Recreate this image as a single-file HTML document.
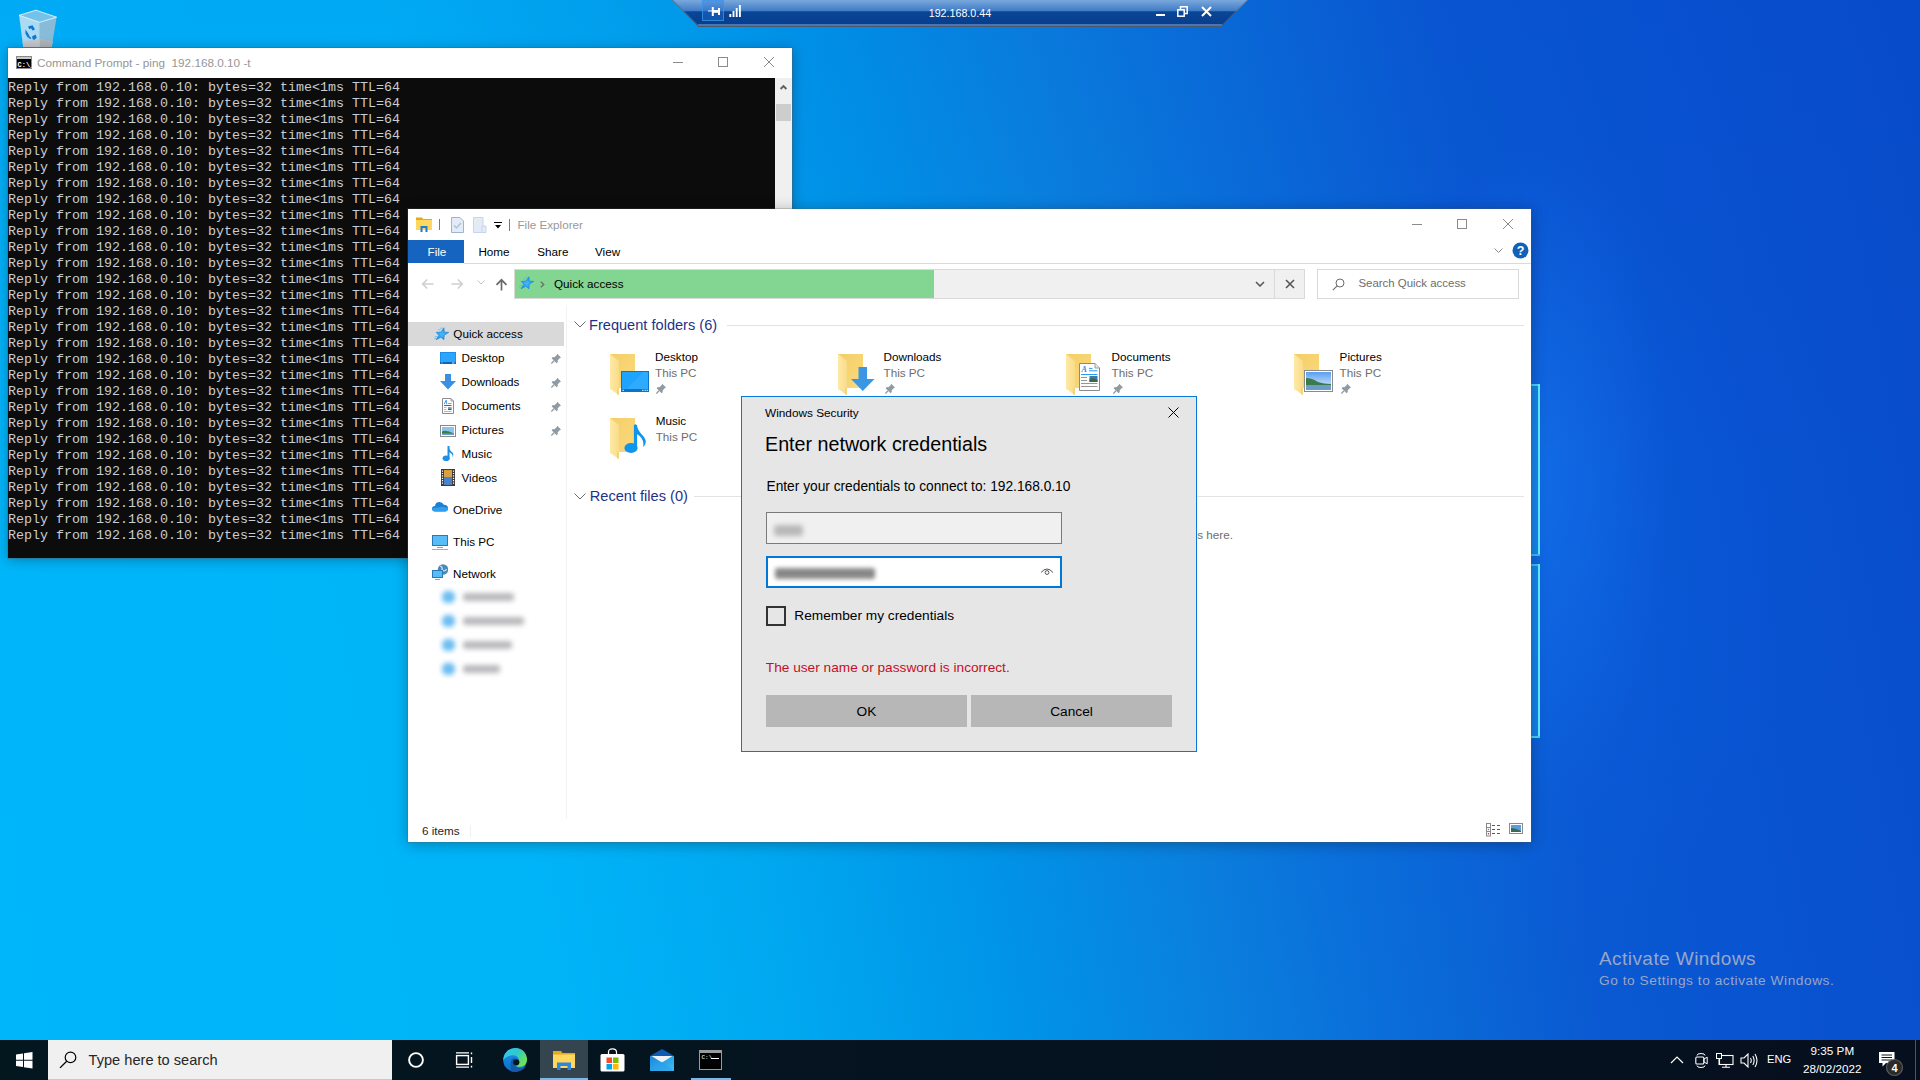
<!DOCTYPE html>
<html><head><meta charset="utf-8">
<style>
*{margin:0;padding:0;box-sizing:border-box}
html,body{width:1920px;height:1080px;overflow:hidden}
body{position:relative;font-family:"Liberation Sans",sans-serif;font-size:11.7px;color:#000;background:#0a50c8}
.a{position:absolute}
.t{position:absolute;white-space:pre;line-height:1}
#bg{position:absolute;left:0;top:0;width:1920px;height:1040px;
background:
 radial-gradient(ellipse 130px 330px at 1540px 470px,rgba(30,140,255,.32),rgba(30,140,255,0) 100%),
 radial-gradient(ellipse 320px 420px at 1480px 560px,rgba(20,110,250,.22),rgba(20,110,250,0) 100%),
 linear-gradient(80deg,#00b6fa 0%,#00b4f8 27%,#00a8f0 37.8%,#0094e8 48.3%,#0a80de 57.8%,#0a70da 64.9%,#0a62d4 72%,#0a58d2 76.8%,#0852d0 88%,#084cca 100%);}
#shade{position:absolute;left:0;top:0;width:1920px;height:1040px;background:linear-gradient(180deg,rgba(0,60,200,.09) 0%,rgba(0,60,200,.03) 30%,rgba(0,60,200,0) 45%)}
#cmd{position:absolute;left:8px;top:48px;width:784px;height:510px;background:#0c0c0c;box-shadow:0 0 0 1px rgba(90,90,90,.35),0 2px 12px rgba(0,0,0,.3)}
#cmd .tb{position:absolute;left:0;top:0;width:784px;height:30px;background:#fff}
#cmd pre{position:absolute;left:0;top:31.5px;font-family:"Liberation Mono",monospace;font-size:13.33px;line-height:16px;color:#cccccc}
#cmd .sb{position:absolute;left:767px;top:30px;width:17px;height:480px;background:#f0f0f0}
#exp{position:absolute;left:408px;top:209px;width:1123px;height:633px;background:#fff;box-shadow:0 0 0 1px rgba(90,90,90,.25),0 2px 14px rgba(0,0,0,.3);overflow:hidden}
#dlg{position:absolute;left:741px;top:396px;width:456px;height:356px;background:#e6e6e6;border:1px solid #0a78d6}
#tb{position:absolute;left:0;top:1040px;width:1920px;height:40px;background:linear-gradient(90deg,#03171f,#051320 50%,#060f1e)}
</style></head><body>
<div id="bg"></div>
<div id="shade"></div>
<svg class="a" style="left:17px;top:8px" width="42" height="42" viewBox="0 0 42 42"><path d="M2.1 7.3L22.8 14.3L22.8 39L6.2 39Z" fill="#b4dcf2" opacity=".95"/><path d="M22.8 14.3L39.6 9.2L34.7 39L22.8 39Z" fill="#8fbcd6" opacity=".95"/><path d="M2.1 7.3L19 2.2L39.6 9.2L22.8 14.3Z" fill="#74c2ea"/><path d="M2.1 7.3L19 2.2L39.6 9.2L22.8 14.3Z" fill="none" stroke="#e6f4fc" stroke-width="0.9"/><path d="M5.6 33.5L22.8 31L35.6 33.5L34.7 39L6.2 39Z" fill="#c4c8cc"/><path d="M22.8 31L35.6 33.5L34.7 39L22.8 39Z" fill="#aeb4b8"/><g fill="#0b78d6"><path d="M11 18.5L15.5 17.2L18 21.5L15.6 22.5L14 20.2L12.4 21.2Z"/><path d="M8.5 21.5L11.2 25.5L12.6 28.5L14.5 30.2L13.2 31L10.4 29L8.4 25.5Z"/><path d="M15 28.5L18.5 26.5L19.8 29.5L17.6 31.8L15.8 31.5Z"/></g></svg>
<div class="a" style="left:1531px;top:384px;width:9px;height:172px;background:rgba(30,170,250,.45)"></div>
<div class="a" style="left:1531px;top:384px;width:9px;height:2px;background:#40d8f0"></div>
<div class="a" style="left:1538px;top:384px;width:2px;height:172px;background:#60f0ff"></div>
<div class="a" style="left:1531px;top:554px;width:9px;height:2px;background:#38c0f0"></div>
<div class="a" style="left:1531px;top:564px;width:9px;height:174px;background:rgba(30,170,250,.45)"></div>
<div class="a" style="left:1531px;top:564px;width:9px;height:2px;background:#38c0f0"></div>
<div class="a" style="left:1538px;top:564px;width:2px;height:174px;background:#60f0ff"></div>
<div class="a" style="left:1531px;top:736px;width:9px;height:2px;background:#40d8f0"></div>
<div class="t" style="left:1599.00px;top:948.92px;font-size:19px;color:#98a6c8;letter-spacing:0.44px">Activate Windows</div>
<div class="t" style="left:1599.00px;top:973.90px;font-size:13.7px;color:#98a6c8;letter-spacing:0.55px">Go to Settings to activate Windows.</div>
<svg class="a" style="left:672px;top:0px" width="576" height="28" viewBox="0 0 576 28"><defs><linearGradient id="rdp" x1="0" y1="0" x2="0" y2="1"><stop offset="0" stop-color="#7aa8dc"/><stop offset=".42" stop-color="#3f7cc6"/><stop offset=".45" stop-color="#0a4696"/><stop offset="1" stop-color="#083c8c"/></linearGradient></defs><path d="M0 0H576L550 26H26Z" fill="url(#rdp)"/><path d="M26 25H550" stroke="#8ab0e0" stroke-width="1"/><path d="M26 26.5H550" stroke="#4a5868" stroke-width="1"/><path d="M0.5 0L26.5 26" stroke="#5a6878" stroke-width="1"/><path d="M575.5 0L549.5 26" stroke="#5a6878" stroke-width="1"/></svg>
<div class="a" style="left:702px;top:0px;width:22px;height:21px;background:rgba(40,120,220,.35);border:1px solid rgba(60,150,235,.75)"></div>
<svg class="a" style="left:706px;top:5px" width="16" height="12" viewBox="0 0 16 12"><path d="M2 6H14" stroke="#f4f8fc" stroke-width="1"/><path d="M6.8 2V11M13 3V10" stroke="#fff" stroke-width="2"/><path d="M7 5H13V7.8H7Z" fill="#fff"/></svg>
<svg class="a" style="left:729px;top:4px" width="13" height="14" viewBox="0 0 13 14"><path d="M1.3 10V13M4.5 7V13M7.7 4V13M10.9 1V13" stroke="#fff" stroke-width="1.9"/></svg>
<div class="t" style="left:928.70px;top:8.14px;font-size:10.7px;color:#fff;">192.168.0.44</div>
<div class="a" style="left:1156px;top:14px;width:9px;height:2px;background:#fff"></div>
<svg class="a" style="left:1177px;top:6px" width="11" height="11" viewBox="0 0 11 11"><rect x="0.8" y="3.8" width="6.4" height="6.4" fill="none" stroke="#fff" stroke-width="1.5"/><path d="M3.5 3.5V0.8H10.2V7.5H7.5" fill="none" stroke="#fff" stroke-width="1.5"/></svg>
<svg class="a" style="left:1201px;top:6px" width="11" height="11" viewBox="0 0 11 11"><path d="M1 1L10 10M10 1L1 10" stroke="#fff" stroke-width="2"/></svg>
<div id="cmd">
 <div class="tb">
  <div class="t" style="left:29px;top:9px;font-size:11.75px;color:#969696">Command Prompt - ping  192.168.0.10 -t</div>
  <svg class="a" style="left:8px;top:8px" width="16" height="13" viewBox="0 0 16 13"><rect x="0.5" y="0.5" width="15" height="12" fill="#000" stroke="#8a8a8a"/><rect x="1" y="1" width="14" height="2" fill="#c8c8c8"/><text x="1.5" y="10.5" font-family="Liberation Mono" font-size="7" font-weight="bold" fill="#fff">C:\_</text></svg>
  <div class="a" style="left:665px;top:14px;width:10px;height:1px;background:#8a8a8a"></div>
  <div class="a" style="left:710px;top:9px;width:10px;height:10px;border:1px solid #8a8a8a"></div>
  <svg class="a" style="left:756px;top:9px" width="10" height="10" viewBox="0 0 10 10"><path d="M0 0L10 10M10 0L0 10" stroke="#8a8a8a" stroke-width="1"/></svg>
 </div>
 <pre>Reply from 192.168.0.10: bytes=32 time&lt;1ms TTL=64
Reply from 192.168.0.10: bytes=32 time&lt;1ms TTL=64
Reply from 192.168.0.10: bytes=32 time&lt;1ms TTL=64
Reply from 192.168.0.10: bytes=32 time&lt;1ms TTL=64
Reply from 192.168.0.10: bytes=32 time&lt;1ms TTL=64
Reply from 192.168.0.10: bytes=32 time&lt;1ms TTL=64
Reply from 192.168.0.10: bytes=32 time&lt;1ms TTL=64
Reply from 192.168.0.10: bytes=32 time&lt;1ms TTL=64
Reply from 192.168.0.10: bytes=32 time&lt;1ms TTL=64
Reply from 192.168.0.10: bytes=32 time&lt;1ms TTL=64
Reply from 192.168.0.10: bytes=32 time&lt;1ms TTL=64
Reply from 192.168.0.10: bytes=32 time&lt;1ms TTL=64
Reply from 192.168.0.10: bytes=32 time&lt;1ms TTL=64
Reply from 192.168.0.10: bytes=32 time&lt;1ms TTL=64
Reply from 192.168.0.10: bytes=32 time&lt;1ms TTL=64
Reply from 192.168.0.10: bytes=32 time&lt;1ms TTL=64
Reply from 192.168.0.10: bytes=32 time&lt;1ms TTL=64
Reply from 192.168.0.10: bytes=32 time&lt;1ms TTL=64
Reply from 192.168.0.10: bytes=32 time&lt;1ms TTL=64
Reply from 192.168.0.10: bytes=32 time&lt;1ms TTL=64
Reply from 192.168.0.10: bytes=32 time&lt;1ms TTL=64
Reply from 192.168.0.10: bytes=32 time&lt;1ms TTL=64
Reply from 192.168.0.10: bytes=32 time&lt;1ms TTL=64
Reply from 192.168.0.10: bytes=32 time&lt;1ms TTL=64
Reply from 192.168.0.10: bytes=32 time&lt;1ms TTL=64
Reply from 192.168.0.10: bytes=32 time&lt;1ms TTL=64
Reply from 192.168.0.10: bytes=32 time&lt;1ms TTL=64
Reply from 192.168.0.10: bytes=32 time&lt;1ms TTL=64
Reply from 192.168.0.10: bytes=32 time&lt;1ms TTL=64</pre>
 <div class="sb"><svg class="a" style="left:4px;top:6px" width="9" height="6" viewBox="0 0 9 6"><path d="M1.6 5L4.5 2L7.4 5" fill="none" stroke="#606060" stroke-width="1.9"/></svg><div class="a" style="left:1px;top:26px;width:15px;height:17px;background:#cdcdcd"></div></div>
</div>

<div id="exp">
<svg class="a" style="left:8px;top:8px" width="16" height="15" viewBox="0 0 16 15"><path d="M0 0.5H6L7 2H16V13H0Z" fill="#e8a817"/><path d="M0 3H16V13H0Z" fill="#ffd75e"/><path d="M4.5 9H11.5V15H9.5V11H6.5V15H4.5Z" fill="#1a7fd4"/></svg>
<div class="a" style="left:31px;top:10px;width:1px;height:11px;background:#7a7a7a"></div>
<svg class="a" style="left:43px;top:8px" width="13" height="16" viewBox="0 0 13 16"><path d="M0.5 0.5H9L12.5 4V15.5H0.5Z" fill="#e3ebf7" stroke="#9fb4d2"/><path d="M3 8.5L5.5 11L10 6" fill="none" stroke="#a8bbd6" stroke-width="1.2"/></svg>
<svg class="a" style="left:65px;top:8px" width="14" height="16" viewBox="0 0 14 16"><path d="M0.5 0.5H10V15.5H0.5Z" fill="#e3ebf7" stroke="#c8d5ea"/><path d="M9 9H13V15.5H9Z" fill="#e3ebf7" stroke="#c8d5ea"/></svg>
<svg class="a" style="left:86px;top:13px" width="8" height="8" viewBox="0 0 8 8"><path d="M0 0.5H8" stroke="#000" stroke-width="1"/><path d="M1 3H7L4 6.5Z" fill="#000"/></svg>
<div class="a" style="left:101px;top:10px;width:1px;height:12px;background:#7a7a7a"></div>
<div class="t" style="left:109.40px;top:10.30px;font-size:11.7px;color:#999;">File Explorer</div>
<div class="a" style="left:1004px;top:15px;width:10px;height:1px;background:#8a8a8a"></div>
<div class="a" style="left:1049px;top:10px;width:10px;height:10px;border:1px solid #8a8a8a"></div>
<svg class="a" style="left:1095px;top:10px" width="10" height="10" viewBox="0 0 10 10"><path d="M0 0L10 10M10 0L0 10" stroke="#8a8a8a" stroke-width="1"/></svg>
<div class="a" style="left:0px;top:31px;width:56px;height:23px;background:#1565c0"></div>
<div class="t" style="left:19.50px;top:37.10px;font-size:11.7px;color:#fff;">File</div>
<div class="t" style="left:70.40px;top:37.10px;font-size:11.7px;color:#000;">Home</div>
<div class="t" style="left:129.20px;top:37.10px;font-size:11.7px;color:#000;">Share</div>
<div class="t" style="left:187.00px;top:37.10px;font-size:11.7px;color:#000;">View</div>
<div class="a" style="left:56px;top:54px;width:1067px;height:1px;background:#dadada"></div>
<svg class="a" style="left:1086px;top:39px" width="9" height="6" viewBox="0 0 9 6"><path d="M0.5 0.5L4.5 4.5L8.5 0.5" fill="none" stroke="#8a8a8a" stroke-width="1"/></svg>
<svg class="a" style="left:1104px;top:33px" width="17" height="17" viewBox="0 0 17 17"><circle cx="8.5" cy="8.5" r="8" fill="#1062b8"/><text x="8.5" y="13.2" text-anchor="middle" font-family="Liberation Sans" font-weight="bold" font-size="12.5" fill="#fff">?</text></svg>
<svg class="a" style="left:13px;top:69px" width="13" height="12" viewBox="0 0 13 12"><path d="M12.5 6H1.8M6.2 1.5L1.7 6L6.2 10.5" fill="none" stroke="#cfcfcf" stroke-width="1.6"/></svg>
<svg class="a" style="left:43px;top:69px" width="13" height="12" viewBox="0 0 13 12"><path d="M0.5 6H11.2M6.8 1.5L11.3 6L6.8 10.5" fill="none" stroke="#cfcfcf" stroke-width="1.6"/></svg>
<svg class="a" style="left:69px;top:71px" width="8" height="5" viewBox="0 0 8 5"><path d="M0.5 0.5L4 4L7.5 0.5" fill="none" stroke="#c4c4c4" stroke-width="1"/></svg>
<svg class="a" style="left:87px;top:69px" width="13" height="13" viewBox="0 0 13 13"><path d="M6.5 12.5V2M1.5 6.8L6.5 1.8L11.5 6.8" fill="none" stroke="#6a6a6a" stroke-width="1.7"/></svg>
<div class="a" style="left:106px;top:60px;width:791px;height:30px;background:#f0f0f0;border:1px solid #d9d9d9"></div>
<div class="a" style="left:107px;top:61px;width:419px;height:28px;background:#83d692"></div>
<svg class="a" style="left:110px;top:66px" width="17" height="16" viewBox="0 0 17 16"><defs><radialGradient id="stg" cx=".45" cy=".55" r=".6"><stop offset="0" stop-color="#46b8ff"/><stop offset="1" stop-color="#1a8ee6"/></radialGradient></defs><path d="M10.98 1.80L11.19 6.13L15.75 6.36L11.18 9.27L10.92 13.74L7.88 11.20L3.16 13.74L5.85 9.27L3.20 6.36L7.90 6.13Z" fill="url(#stg)" stroke="#1b88dc" stroke-width="0.7" stroke-linejoin="round"/><path d="M7.2 2.2H10.2M5 3.8H7.6M1.8 10.6H4.4M1 12.4H3.6" stroke="#5ab0ee" stroke-width="0.9" opacity=".7"/></svg>
<svg class="a" style="left:132px;top:72px" width="5" height="7" viewBox="0 0 5 7"><path d="M0.8 0.8L3.8 3.5L0.8 6.2" fill="none" stroke="#6a6a6a" stroke-width="1.2"/></svg>
<div class="t" style="left:146.00px;top:69.10px;font-size:11.7px;color:#000;">Quick access</div>
<svg class="a" style="left:847px;top:72px" width="10" height="6" viewBox="0 0 10 6"><path d="M1 1L5 5L9 1" fill="none" stroke="#555" stroke-width="1.5"/></svg>
<div class="a" style="left:866px;top:61px;width:1px;height:28px;background:#d9d9d9"></div>
<svg class="a" style="left:877px;top:70px" width="10" height="10" viewBox="0 0 10 10"><path d="M1 1L9 9M9 1L1 9" stroke="#555" stroke-width="1.6"/></svg>
<div class="a" style="left:909px;top:60px;width:202px;height:30px;background:#fff;border:1px solid #d9d9d9"></div>
<svg class="a" style="left:924px;top:69px" width="13" height="13" viewBox="0 0 13 13"><circle cx="8" cy="5" r="4" fill="none" stroke="#6d6d6d" stroke-width="1"/><path d="M5.2 7.8L0.8 12.2" stroke="#6d6d6d" stroke-width="1.1"/></svg>
<div class="t" style="left:950.40px;top:69.01px;font-size:11.45px;color:#6d6d6d;">Search Quick access</div>
<div class="a" style="left:0px;top:113px;width:156px;height:24px;background:#d9d9d9"></div>
<div class="a" style="left:158px;top:96px;width:1px;height:514px;background:#f2f2f2"></div>
<svg class="a" style="left:25px;top:117px" width="17" height="16" viewBox="0 0 17 16"><defs><radialGradient id="stg" cx=".45" cy=".55" r=".6"><stop offset="0" stop-color="#46b8ff"/><stop offset="1" stop-color="#1a8ee6"/></radialGradient></defs><path d="M10.98 1.80L11.19 6.13L15.75 6.36L11.18 9.27L10.92 13.74L7.88 11.20L3.16 13.74L5.85 9.27L3.20 6.36L7.90 6.13Z" fill="url(#stg)" stroke="#1b88dc" stroke-width="0.7" stroke-linejoin="round"/><path d="M7.2 2.2H10.2M5 3.8H7.6M1.8 10.6H4.4M1 12.4H3.6" stroke="#5ab0ee" stroke-width="0.9" opacity=".7"/></svg>
<div class="t" style="left:45.30px;top:119.10px;font-size:11.7px;color:#000;">Quick access</div>
<div class="t" style="left:53.50px;top:143.10px;font-size:11.7px;color:#000;">Desktop</div>
<svg class="a" style="left:143px;top:144px" width="11" height="11" viewBox="0 0 11 11"><path d="M6.2 0.8L10 4.6L8.6 5.2L6.6 7.4L6.8 9L5.6 10.2L0.6 5.2L1.8 4L3.4 4.2L5.6 2.2Z" fill="#8f9aa3"/><path d="M3 7.8L0.3 10.5" stroke="#8f9aa3" stroke-width="1.3"/></svg>
<div class="t" style="left:53.50px;top:167.10px;font-size:11.7px;color:#000;">Downloads</div>
<svg class="a" style="left:143px;top:168px" width="11" height="11" viewBox="0 0 11 11"><path d="M6.2 0.8L10 4.6L8.6 5.2L6.6 7.4L6.8 9L5.6 10.2L0.6 5.2L1.8 4L3.4 4.2L5.6 2.2Z" fill="#8f9aa3"/><path d="M3 7.8L0.3 10.5" stroke="#8f9aa3" stroke-width="1.3"/></svg>
<div class="t" style="left:53.50px;top:191.10px;font-size:11.7px;color:#000;">Documents</div>
<svg class="a" style="left:143px;top:192px" width="11" height="11" viewBox="0 0 11 11"><path d="M6.2 0.8L10 4.6L8.6 5.2L6.6 7.4L6.8 9L5.6 10.2L0.6 5.2L1.8 4L3.4 4.2L5.6 2.2Z" fill="#8f9aa3"/><path d="M3 7.8L0.3 10.5" stroke="#8f9aa3" stroke-width="1.3"/></svg>
<div class="t" style="left:53.50px;top:215.10px;font-size:11.7px;color:#000;">Pictures</div>
<svg class="a" style="left:143px;top:216px" width="11" height="11" viewBox="0 0 11 11"><path d="M6.2 0.8L10 4.6L8.6 5.2L6.6 7.4L6.8 9L5.6 10.2L0.6 5.2L1.8 4L3.4 4.2L5.6 2.2Z" fill="#8f9aa3"/><path d="M3 7.8L0.3 10.5" stroke="#8f9aa3" stroke-width="1.3"/></svg>
<div class="t" style="left:53.50px;top:239.10px;font-size:11.7px;color:#000;">Music</div>
<div class="t" style="left:53.50px;top:263.10px;font-size:11.7px;color:#000;">Videos</div>
<svg class="a" style="left:32px;top:143px" width="16" height="12" viewBox="0 0 16 12"><rect x="0" y="0" width="16" height="12" fill="#1c8fe8"/><rect x="1" y="1" width="14" height="9" fill="#2aa6ff"/><rect x="0" y="10" width="16" height="2" fill="#0a67b8"/><path d="M1.5 11H2.5M12 11H14.5" stroke="#fff" stroke-width="0.8"/></svg>
<svg class="a" style="left:32px;top:165px" width="16" height="16" viewBox="0 0 16 16"><path d="M5 0H11V7H16L8 15.5L0 7H5Z" fill="#3b8fe0"/></svg>
<svg class="a" style="left:34px;top:189px" width="12" height="16" viewBox="0 0 12 16"><path d="M0.5 0.5H9L11.5 3V15.5H0.5Z" fill="#fff" stroke="#8c8c8c"/><path d="M9 0.5V3H11.5" fill="none" stroke="#8c8c8c" stroke-width=".8"/><path d="M2.2 6.2L4.2 2.2L4.8 6.2" fill="none" stroke="#2a8ae0" stroke-width=".9"/><path d="M6.2 5.5H9.5" stroke="#3aaee8" stroke-width=".9"/><path d="M2 7.5H9.6" stroke="#0a78d0" stroke-width="1"/><path d="M2 9.5H4.5M2 11.5H4.5M2 13.5H9.6" stroke="#b0b0b0" stroke-width=".9"/><rect x="6" y="9" width="3.6" height="1.5" fill="#6aa0f0"/><rect x="6" y="10.5" width="3.6" height="1.5" fill="#2f6a48"/></svg>
<svg class="a" style="left:32px;top:216px" width="16" height="12" viewBox="0 0 16 12"><rect x="0.5" y="0.5" width="15" height="11" fill="#fff" stroke="#8a8a8a"/><rect x="2" y="2" width="12" height="8" fill="#8cc4ec"/><path d="M2 6.5Q6 4.5 14 8.5V10H2Z" fill="#3c7a50"/><rect x="2" y="8.5" width="12" height="1.5" fill="#6aa0d0"/></svg>
<svg class="a" style="left:34px;top:236px" width="13" height="17" viewBox="0 0 13 17"><path d="M6.5 1V12.5" stroke="#1e90e8" stroke-width="2"/><path d="M6.5 1Q7 5 11 8Q12 10 10.5 12.5Q11.5 8.5 6.5 7Z" fill="#1e90e8"/><ellipse cx="4.2" cy="13.2" rx="3.6" ry="2.8" fill="#1e90e8"/></svg>
<svg class="a" style="left:33px;top:260px" width="14" height="17" viewBox="0 0 14 17"><rect x="0" y="0" width="14" height="17" fill="#3a3a3a"/><rect x="3" y="1" width="8" height="15" fill="#4a82c8"/><rect x="3" y="1" width="8" height="7" fill="#d8a040"/><path d="M1.5 1.5V16M12.5 1.5V16" stroke="#fff" stroke-width="1.2" stroke-dasharray="1.2 1.2"/></svg>
<svg class="a" style="left:24px;top:292px" width="16" height="11" viewBox="0 0 16 11"><path d="M3.5 10.5Q0 10.5 0 7.5Q0 5 3 5Q3.5 1 7.5 1Q10.5 1 11.8 3.8Q16 3.8 16 7.3Q16 10.5 12.8 10.5Z" fill="#1b7fd6"/><path d="M3.5 10.5Q0 10.5 0.2 7.6Q3 6 6.5 6.5Q10 4.5 16 7.3Q16 10.5 12.8 10.5Z" fill="#30a0ec"/></svg>
<svg class="a" style="left:24px;top:326px" width="16" height="15" viewBox="0 0 16 15"><rect x="0.5" y="0.5" width="15" height="10" fill="#56bdf6" stroke="#2a78b8"/><path d="M5 12.5H11" stroke="#8aa0b8" stroke-width="1"/><path d="M0 14.5H16" stroke="#9ab0c8" stroke-width="1"/></svg>
<svg class="a" style="left:24px;top:355px" width="16" height="16" viewBox="0 0 16 16"><circle cx="11" cy="5.5" r="5.2" fill="#4a8ab8"/><path d="M8 2Q11 3 10 6Q13 8 14.5 5" fill="none" stroke="#cfe6f6" stroke-width="1.2"/><rect x="0.5" y="6.5" width="10" height="7" fill="#56bdf6" stroke="#2a78b8"/><path d="M3 15.5H8" stroke="#8aa0b8" stroke-width="1"/></svg>
<div class="t" style="left:45.00px;top:295.10px;font-size:11.7px;color:#000;">OneDrive</div>
<div class="t" style="left:45.00px;top:327.10px;font-size:11.7px;color:#000;">This PC</div>
<div class="t" style="left:45.00px;top:359.10px;font-size:11.7px;color:#000;">Network</div>
<div class="a" style="left:34px;top:382px;width:13px;height:12px;background:#6cbdf2;border-radius:5px;filter:blur(2.4px)"></div>
<div class="a" style="left:55px;top:384px;width:51px;height:8px;background:#a8a6aa;border-radius:3px;filter:blur(2.6px);opacity:.8"></div>
<div class="a" style="left:34px;top:406px;width:13px;height:12px;background:#6cbdf2;border-radius:5px;filter:blur(2.4px)"></div>
<div class="a" style="left:55px;top:408px;width:61px;height:8px;background:#a8a6aa;border-radius:3px;filter:blur(2.6px);opacity:.8"></div>
<div class="a" style="left:34px;top:430px;width:13px;height:12px;background:#6cbdf2;border-radius:5px;filter:blur(2.4px)"></div>
<div class="a" style="left:55px;top:432px;width:49px;height:8px;background:#a8a6aa;border-radius:3px;filter:blur(2.6px);opacity:.8"></div>
<div class="a" style="left:34px;top:454px;width:13px;height:12px;background:#6cbdf2;border-radius:5px;filter:blur(2.4px)"></div>
<div class="a" style="left:55px;top:456px;width:37px;height:8px;background:#a8a6aa;border-radius:3px;filter:blur(2.6px);opacity:.8"></div>
<svg class="a" style="left:166px;top:112px" width="12" height="7" viewBox="0 0 12 7"><path d="M0.5 0.5L6 6L11.5 0.5" fill="none" stroke="#6d6d6d" stroke-width="1"/></svg>
<div class="t" style="left:181.00px;top:109.04px;font-size:14.6px;color:#1e3287;">Frequent folders (6)</div>
<div class="a" style="left:319px;top:116px;width:797px;height:1px;background:#e3e3e3"></div>
<svg class="a" style="left:166px;top:284px" width="12" height="7" viewBox="0 0 12 7"><path d="M0.5 0.5L6 6L11.5 0.5" fill="none" stroke="#6d6d6d" stroke-width="1"/></svg>
<div class="t" style="left:181.75px;top:280.34px;font-size:14.6px;color:#1e3287;">Recent files (0)</div>
<div class="a" style="left:286px;top:287px;width:830px;height:1px;background:#e3e3e3"></div>
<div class="t" style="left:825.00px;top:320.10px;font-size:11.7px;color:#6d6d6d;transform:translateX(-100%)">After you&#x27;ve opened some files, we&#x27;ll show the most recent ones here.</div>
<svg class="a" style="left:202px;top:145px" width="26" height="42" viewBox="0 0 26 42"><defs><linearGradient id="fb202" x1="0" y1="0" x2="1" y2="1"><stop offset="0" stop-color="#f3cf6a"/><stop offset="1" stop-color="#fcd97a"/></linearGradient>
<linearGradient id="ff202" x1="0" y1="0" x2="1" y2="0"><stop offset="0" stop-color="#ffe9a6"/><stop offset="1" stop-color="#f8dc88"/></linearGradient></defs>
<path d="M0 0H25V34H8Z" fill="url(#fb202)"/>
<path d="M0 0L9 7V41L0 35Z" fill="url(#ff202)"/>
<path d="M8 34V41" stroke="#e8c060" stroke-width="0.6"/></svg>
<svg class="a" style="left:213px;top:162px" width="28" height="21" viewBox="0 0 28 21"><rect x="0" y="0" width="28" height="21" fill="#0a74c8"/><rect x="1" y="1" width="26" height="17" fill="#1ea4ff"/><path d="M6 18L22 1H27V18Z" fill="#38b0ff" opacity=".6"/><path d="M1.5 19.3H3M21 19.3H22.5M23.5 19.3H25M25.6 19.3H27" stroke="#fff" stroke-width="0.9"/></svg>
<div class="t" style="left:247.00px;top:142.10px;font-size:11.7px;color:#000;">Desktop</div>
<div class="t" style="left:247.00px;top:158.10px;font-size:11.7px;color:#6d6d6d;">This PC</div>
<svg class="a" style="left:248px;top:174px" width="11" height="11" viewBox="0 0 11 11"><path d="M6.2 0.8L10 4.6L8.6 5.2L6.6 7.4L6.8 9L5.6 10.2L0.6 5.2L1.8 4L3.4 4.2L5.6 2.2Z" fill="#8f9aa3"/><path d="M3 7.8L0.3 10.5" stroke="#8f9aa3" stroke-width="1.3"/></svg>
<svg class="a" style="left:430px;top:145px" width="26" height="42" viewBox="0 0 26 42"><defs><linearGradient id="fb430" x1="0" y1="0" x2="1" y2="1"><stop offset="0" stop-color="#f3cf6a"/><stop offset="1" stop-color="#fcd97a"/></linearGradient>
<linearGradient id="ff430" x1="0" y1="0" x2="1" y2="0"><stop offset="0" stop-color="#ffe9a6"/><stop offset="1" stop-color="#f8dc88"/></linearGradient></defs>
<path d="M0 0H25V34H8Z" fill="url(#fb430)"/>
<path d="M0 0L9 7V41L0 35Z" fill="url(#ff430)"/>
<path d="M8 34V41" stroke="#e8c060" stroke-width="0.6"/></svg>
<svg class="a" style="left:443px;top:158px" width="24" height="24" viewBox="0 0 24 24"><path d="M7.5 0H16V12H23.5L11.8 24L0 12H7.5Z" fill="#3b97e3"/></svg>
<div class="t" style="left:475.50px;top:142.10px;font-size:11.7px;color:#000;">Downloads</div>
<div class="t" style="left:475.50px;top:158.10px;font-size:11.7px;color:#6d6d6d;">This PC</div>
<svg class="a" style="left:476.5px;top:174px" width="11" height="11" viewBox="0 0 11 11"><path d="M6.2 0.8L10 4.6L8.6 5.2L6.6 7.4L6.8 9L5.6 10.2L0.6 5.2L1.8 4L3.4 4.2L5.6 2.2Z" fill="#8f9aa3"/><path d="M3 7.8L0.3 10.5" stroke="#8f9aa3" stroke-width="1.3"/></svg>
<svg class="a" style="left:658px;top:145px" width="26" height="42" viewBox="0 0 26 42"><defs><linearGradient id="fb658" x1="0" y1="0" x2="1" y2="1"><stop offset="0" stop-color="#f3cf6a"/><stop offset="1" stop-color="#fcd97a"/></linearGradient>
<linearGradient id="ff658" x1="0" y1="0" x2="1" y2="0"><stop offset="0" stop-color="#ffe9a6"/><stop offset="1" stop-color="#f8dc88"/></linearGradient></defs>
<path d="M0 0H25V34H8Z" fill="url(#fb658)"/>
<path d="M0 0L9 7V41L0 35Z" fill="url(#ff658)"/>
<path d="M8 34V41" stroke="#e8c060" stroke-width="0.6"/></svg>
<svg class="a" style="left:671px;top:154px" width="21" height="28" viewBox="0 0 21 28"><path d="M0.5 0.5H16L20.5 5V27.5H0.5Z" fill="#fff" stroke="#8a8a8a"/><path d="M16 0.5V5H20.5" fill="#e8e8e8" stroke="#8a8a8a" stroke-width=".8"/><text x="2.5" y="8.5" font-family="Liberation Serif" font-style="italic" font-weight="bold" font-size="8" fill="#2a8ae0">A</text><path d="M10 5.4H13.5M10 7.8H18.5M2 11.5H18.5" stroke="#2a9af0" stroke-width="1"/><path d="M2 14.5H8M2 17.5H8M2 20.5H18.5M2 23.5H18.5" stroke="#8a8a8a" stroke-width="0.9"/><rect x="10.5" y="13" width="8" height="6" fill="#3a7ab0"/><path d="M10.5 16Q14 14 18.5 17V19H10.5Z" fill="#3a6a40"/></svg>
<div class="t" style="left:703.60px;top:142.10px;font-size:11.7px;color:#000;">Documents</div>
<div class="t" style="left:703.60px;top:158.10px;font-size:11.7px;color:#6d6d6d;">This PC</div>
<svg class="a" style="left:704.6px;top:174px" width="11" height="11" viewBox="0 0 11 11"><path d="M6.2 0.8L10 4.6L8.6 5.2L6.6 7.4L6.8 9L5.6 10.2L0.6 5.2L1.8 4L3.4 4.2L5.6 2.2Z" fill="#8f9aa3"/><path d="M3 7.8L0.3 10.5" stroke="#8f9aa3" stroke-width="1.3"/></svg>
<svg class="a" style="left:886px;top:145px" width="26" height="42" viewBox="0 0 26 42"><defs><linearGradient id="fb886" x1="0" y1="0" x2="1" y2="1"><stop offset="0" stop-color="#f3cf6a"/><stop offset="1" stop-color="#fcd97a"/></linearGradient>
<linearGradient id="ff886" x1="0" y1="0" x2="1" y2="0"><stop offset="0" stop-color="#ffe9a6"/><stop offset="1" stop-color="#f8dc88"/></linearGradient></defs>
<path d="M0 0H25V34H8Z" fill="url(#fb886)"/>
<path d="M0 0L9 7V41L0 35Z" fill="url(#ff886)"/>
<path d="M8 34V41" stroke="#e8c060" stroke-width="0.6"/></svg>
<svg class="a" style="left:896px;top:161px" width="29" height="22" viewBox="0 0 29 22"><rect x="0.5" y="0.5" width="28" height="21" fill="#fff" stroke="#8a8a8a"/><defs><linearGradient id="sky" x1="0" y1="0" x2="0" y2="1"><stop offset="0" stop-color="#5a9ef0"/><stop offset="1" stop-color="#e8f4fc"/></linearGradient></defs><rect x="2" y="2" width="25" height="18" fill="url(#sky)"/><path d="M2 8Q8 8 14 12Q20 14 27 14V15H2Z" fill="#3c7a4c"/><rect x="2" y="15" width="25" height="5" fill="#6a9ccc"/></svg>
<div class="t" style="left:931.60px;top:142.10px;font-size:11.7px;color:#000;">Pictures</div>
<div class="t" style="left:931.60px;top:158.10px;font-size:11.7px;color:#6d6d6d;">This PC</div>
<svg class="a" style="left:932.6px;top:174px" width="11" height="11" viewBox="0 0 11 11"><path d="M6.2 0.8L10 4.6L8.6 5.2L6.6 7.4L6.8 9L5.6 10.2L0.6 5.2L1.8 4L3.4 4.2L5.6 2.2Z" fill="#8f9aa3"/><path d="M3 7.8L0.3 10.5" stroke="#8f9aa3" stroke-width="1.3"/></svg>
<svg class="a" style="left:202px;top:209px" width="26" height="42" viewBox="0 0 26 42"><defs><linearGradient id="fb202" x1="0" y1="0" x2="1" y2="1"><stop offset="0" stop-color="#f3cf6a"/><stop offset="1" stop-color="#fcd97a"/></linearGradient>
<linearGradient id="ff202" x1="0" y1="0" x2="1" y2="0"><stop offset="0" stop-color="#ffe9a6"/><stop offset="1" stop-color="#f8dc88"/></linearGradient></defs>
<path d="M0 0H25V34H8Z" fill="url(#fb202)"/>
<path d="M0 0L9 7V41L0 35Z" fill="url(#ff202)"/>
<path d="M8 34V41" stroke="#e8c060" stroke-width="0.6"/></svg>
<svg class="a" style="left:216px;top:214px" width="22" height="32" viewBox="0 0 22 32"><path d="M11.5 2V24" stroke="#0f96ec" stroke-width="3.2"/><path d="M10 2Q12 0 13 3Q14 8 20 14Q24 20 19 24Q21 16 13 11Z" fill="#0f96ec"/><ellipse cx="7" cy="25" rx="6.6" ry="5" fill="#0f96ec"/></svg>
<div class="t" style="left:247.70px;top:206.10px;font-size:11.7px;color:#000;">Music</div>
<div class="t" style="left:247.70px;top:222.10px;font-size:11.7px;color:#6d6d6d;">This PC</div>
<div class="t" style="left:14.00px;top:616.10px;font-size:11.7px;color:#1e1e1e;">6 items</div>
<div class="a" style="left:62px;top:616px;width:1px;height:12px;background:#f0f0f0"></div>
<svg class="a" style="left:1078px;top:614px" width="17" height="14" viewBox="0 0 17 14"><rect x="0.5" y="0.5" width="4" height="12.5" fill="#fff" stroke="#8a8a8a"/><path d="M0.5 4.5H4.5M0.5 8.5H4.5" stroke="#8a8a8a"/><path d="M6 2.5H9M11 2.5H14M6 6.5H9M11 6.5H14M6 10.5H9M11 10.5H14" stroke="#5a5a5a" stroke-width="1"/><circle cx="2.5" cy="10.7" r=".8" fill="#e02020"/><circle cx="2.5" cy="6.5" r=".8" fill="#4a8ae0"/></svg>
<svg class="a" style="left:1101px;top:614px" width="14" height="11" viewBox="0 0 14 11"><rect x="0.5" y="0.5" width="13" height="10" fill="#fff" stroke="#8a8a8a"/><rect x="2" y="2" width="10" height="7" fill="#5a9ee0"/><path d="M2 5Q6 5 12 8V9H2Z" fill="#3a6a50"/></svg>
</div>
<div id="dlg">
<div class="t" style="left:23.00px;top:10.91px;font-size:11.8px;color:#000;">Windows Security</div>
<svg class="a" style="left:426px;top:10px" width="11" height="11" viewBox="0 0 11 11"><path d="M0.5 0.5L10.5 10.5M10.5 0.5L0.5 10.5" stroke="#000" stroke-width="1"/></svg>
<div class="t" style="left:23.00px;top:38.12px;font-size:19.7px;color:#000;">Enter network credentials</div>
<div class="t" style="left:24.50px;top:83.07px;font-size:13.74px;color:#000;">Enter your credentials to connect to: 192.168.0.10</div>
<div class="a" style="left:24px;top:115px;width:296px;height:32px;background:#f0f0f0;border:1px solid #7a7a7a"></div>
<div class="a" style="left:32px;top:128px;width:29px;height:11px;background:#b8b8b8;border-radius:3px;filter:blur(2.4px)"></div>
<div class="a" style="left:24px;top:159px;width:296px;height:32px;background:#fff;border:2px solid #0078d7"></div>
<div class="a" style="left:33px;top:171px;width:100px;height:11px;background:#7c7c7c;border-radius:2px;filter:blur(2.3px);opacity:.9"></div>
<svg class="a" style="left:298px;top:169px" width="14" height="10" viewBox="0 0 14 10"><path d="M1 6.5Q7 -0.5 13 6.5" fill="none" stroke="#555" stroke-width="1"/><circle cx="7" cy="6.5" r="1.9" fill="none" stroke="#555" stroke-width="1"/></svg>
<div class="a" style="left:24px;top:209px;width:20px;height:20px;border:2px solid #333"></div>
<div class="t" style="left:52.30px;top:212.10px;font-size:13.7px;color:#000;">Remember my credentials</div>
<div class="t" style="left:23.80px;top:263.62px;font-size:13.68px;color:#c50f1f;">The user name or password is incorrect.</div>
<div class="a" style="left:24px;top:298px;width:201px;height:32px;background:#b7b7b7"></div>
<div class="a" style="left:229px;top:298px;width:201px;height:32px;background:#b7b7b7"></div>
<div class="t" style="left:24px;top:308.30px;width:201px;text-align:center;font-size:13.7px">OK</div>
<div class="t" style="left:229px;top:308.30px;width:201px;text-align:center;font-size:13.7px">Cancel</div>
</div>
<div id="tb">
<svg class="a" style="left:16px;top:12px" width="17" height="17" viewBox="0 0 17 17"><path d="M0 2.4L7 1.4V7.7H0Z M8 1.3L16.5 0V7.7H8Z M0 8.7H7V15L0 14Z M8 8.7H16.5V16.5L8 15.2Z" fill="#fff"/></svg>
<div class="a" style="left:48px;top:0px;width:344px;height:40px;background:#f0f0f0;border-bottom:1px solid #c8c8c8"></div>
<svg class="a" style="left:59px;top:11px" width="18" height="18" viewBox="0 0 18 18"><circle cx="11.5" cy="6.4" r="5.3" fill="none" stroke="#000" stroke-width="1.2"/><path d="M7.7 10.2L1 16.9" stroke="#000" stroke-width="1.3"/></svg>
<div class="t" style="left:88.60px;top:13.44px;font-size:14.6px;color:#262626;">Type here to search</div>
<svg class="a" style="left:408px;top:12px" width="16" height="16" viewBox="0 0 16 16"><circle cx="8" cy="8" r="6.9" fill="none" stroke="#fff" stroke-width="1.9"/></svg>
<svg class="a" style="left:455px;top:12px" width="18" height="16" viewBox="0 0 18 16"><path d="M1 0.8H14M1 15.2H14" stroke="#fff" stroke-width="1.2"/><rect x="1.6" y="3.6" width="11.8" height="8.8" fill="none" stroke="#fff" stroke-width="1.4"/><path d="M16.5 0.5V2.3M16.5 5V11M16.5 13.8V15.5" stroke="#fff" stroke-width="1.4"/></svg>
<svg class="a" style="left:503px;top:8px" width="24" height="24" viewBox="0 0 24 24"><defs><linearGradient id="eg1" x1="0" y1="0" x2="1" y2=".6"><stop offset="0" stop-color="#36c6f4"/><stop offset=".55" stop-color="#2fc8c8"/><stop offset="1" stop-color="#72e44e"/></linearGradient><linearGradient id="eg2" x1="0" y1="0" x2="0" y2="1"><stop offset="0" stop-color="#1c92e6"/><stop offset="1" stop-color="#0b6fd0"/></linearGradient></defs><circle cx="12" cy="12" r="11.8" fill="url(#eg2)"/><path d="M8 13C8.5 11 10.5 10 12.5 10.5C11 12 10.5 14 11 16C12 19.5 16 21 20 20C21 19.7 22 19.2 22.8 18.6C20.5 22 16.5 24 12 24C10 24 8.5 23.5 8 23C7.5 19 7.3 16 8 13Z" fill="#1557a8"/><path d="M0.3 12.5C0.5 5 6 0 12.5 0C19.5 0 24 5.5 24 11.5C24 16 20.5 19 16.5 19C13.5 19 11.8 17.5 12 15.5C15 15.5 16.5 13 15.5 10.5C14 7.5 10 6.5 6 8C3 9 1 11 0.3 12.5Z" fill="url(#eg1)"/><circle cx="13.3" cy="14.3" r="3.1" fill="#03171f"/></svg>
<div class="a" style="left:540px;top:0px;width:48px;height:40px;background:#354550"></div>
<div class="a" style="left:540px;top:38px;width:48px;height:2px;background:#76b9ed"></div>
<svg class="a" style="left:553px;top:11px" width="22" height="19" viewBox="0 0 22 19"><path d="M0 0H8L9.5 2H22V17H0Z" fill="#e8a817"/><path d="M0 3.5H22V17H0Z" fill="#ffd75e"/><path d="M4 11.5H18V19H14.5V15H7.5V19H4Z" fill="#2a88e0"/></svg>
<svg class="a" style="left:600px;top:8px" width="25" height="24" viewBox="0 0 25 24"><path d="M8.5 6V4Q8.5 0.8 12.5 0.8Q16.5 0.8 16.5 4V6" fill="none" stroke="#fff" stroke-width="1.2"/><rect x="0.5" y="6" width="24" height="17.5" rx="1.5" fill="#fff"/><rect x="6.5" y="9.5" width="5.5" height="5.5" fill="#f25022"/><rect x="13" y="9.5" width="5.5" height="5.5" fill="#7fba00"/><rect x="6.5" y="16" width="5.5" height="5.5" fill="#00a4ef"/><rect x="13" y="16" width="5.5" height="5.5" fill="#ffb900"/></svg>
<svg class="a" style="left:650px;top:9px" width="24" height="22" viewBox="0 0 24 22"><defs><linearGradient id="mg" x1="0" y1="0" x2="1" y2="1"><stop offset="0" stop-color="#1a86dc"/><stop offset="1" stop-color="#3cc0f4"/></linearGradient></defs><path d="M0 7L12 0L24 7Z" fill="#0b5cb2"/><rect x="0" y="7" width="24" height="15" fill="url(#mg)"/><path d="M1.5 7H22.5L12 13.5Z" fill="#eef2f6"/><path d="M0 22L12 12.5L24 22Z" fill="#2b9ee8" opacity=".55"/></svg>
<svg class="a" style="left:699px;top:10px" width="23" height="20" viewBox="0 0 23 20"><rect x="0.5" y="0.5" width="22" height="19" fill="#000" stroke="#9a9a9a"/><rect x="1" y="1" width="21" height="2" fill="#9a9a9a"/><text x="2.5" y="9" font-family="Liberation Mono" font-size="6" fill="#fff">C:\</text><path d="M12 8.5H20" stroke="#fff" stroke-width="1"/></svg>
<div class="a" style="left:691px;top:38px;width:40px;height:2px;background:#76b9ed"></div>
<svg class="a" style="left:1670px;top:16px" width="14" height="8" viewBox="0 0 14 8"><path d="M1 7L7 1L13 7" fill="none" stroke="#fff" stroke-width="1.2"/></svg>
<svg class="a" style="left:1695px;top:12px" width="13" height="17" viewBox="0 0 13 17"><path d="M2 3.5Q2 1.5 6 1.5Q10 1.5 10 3.5M2 13.5Q2 15.5 6 15.5Q10 15.5 10 13.5" fill="none" stroke="#fff" stroke-width="1"/><rect x="0.8" y="5" width="8" height="7" rx="1" fill="none" stroke="#fff" stroke-width="1.1"/><path d="M9 7L12.2 5.2V11.8L9 10Z" fill="none" stroke="#fff" stroke-width="1"/></svg>
<svg class="a" style="left:1716px;top:13px" width="18" height="15" viewBox="0 0 18 15"><rect x="3.5" y="2.5" width="13.5" height="9" fill="none" stroke="#fff" stroke-width="1.1"/><path d="M10 11.5V14M6 14.3H14" stroke="#fff" stroke-width="1.1"/><rect x="0.5" y="0.5" width="5" height="5" fill="#071521" stroke="#fff" stroke-width="1"/><path d="M3 5.5V12" stroke="#fff" stroke-width="1"/></svg>
<svg class="a" style="left:1740px;top:13px" width="18" height="15" viewBox="0 0 18 15"><path d="M1 5H4L8 1V14L4 10H1Z" fill="none" stroke="#fff" stroke-width="1.1"/><path d="M10.5 5Q12 7.5 10.5 10M12.8 3Q15.5 7.5 12.8 12M15 1Q19 7.5 15 14" fill="none" stroke="#fff" stroke-width="1.1"/></svg>
<div class="t" style="left:1767.00px;top:14.22px;font-size:11.2px;color:#fff;">ENG</div>
<div class="t" style="left:1810.60px;top:5.10px;font-size:11.7px;color:#fff;">9:35 PM</div>
<div class="t" style="left:1803.00px;top:22.60px;font-size:11.7px;color:#fff;">28/02/2022</div>
<svg class="a" style="left:1878px;top:11px" width="28" height="28" viewBox="0 0 28 28"><path d="M1 1H16.5V12H8L4.5 15.5V12H1Z" fill="#fff"/><path d="M3.5 4H14M3.5 6.5H14M3.5 9H14" stroke="#071521" stroke-width="1"/><circle cx="16.5" cy="16.5" r="8" fill="#2a2a2a" stroke="#5a5a5a" stroke-width="1.2"/><text x="16.5" y="20.6" text-anchor="middle" font-family="Liberation Sans" font-weight="bold" font-size="11" fill="#fff">4</text></svg>
<div class="a" style="left:1915px;top:0px;width:1px;height:40px;background:#4a5560"></div>
</div>
</body></html>
